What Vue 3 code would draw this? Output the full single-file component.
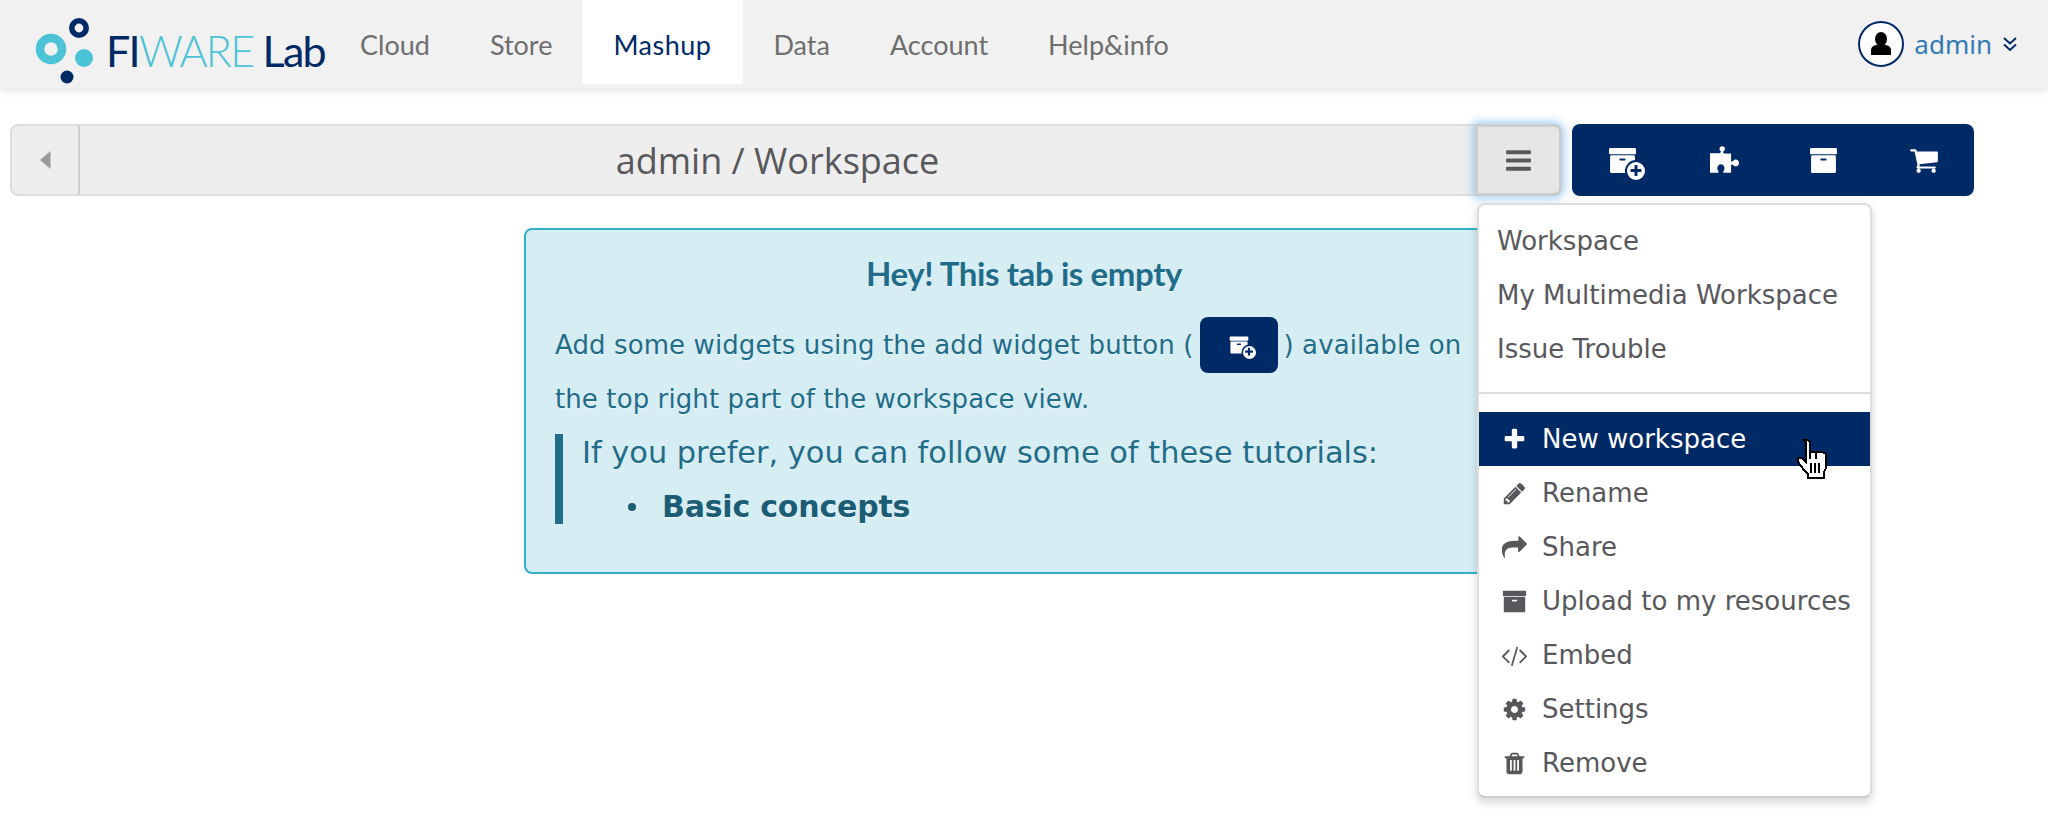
<script setup>
const navItems = [
  { label: 'Cloud' },
  { label: 'Store' },
  { label: 'Mashup', active: true },
  { label: 'Data' },
  { label: 'Account' },
  { label: 'Help&info' }
]
const workspaces = ['Workspace', 'My Multimedia Workspace', 'Issue Trouble']
const P = {
  plus: 'M1600 736v192q0 40-28 68t-68 28h-416v416q0 40-28 68t-68 28h-192q-40 0-68-28t-28-68v-416h-416q-40 0-68-28t-28-68v-192q0-40 28-68t68-28h416v-416q0-40 28-68t68-28h192q40 0 68 28t28 68v416h416q40 0 68 28t28 68z',
  pencil: 'M491 1536l91-91-235-235-91 91v107h128v128h107zm523-928q0-22-22-22-10 0-17 7l-542 542q-7 7-7 17 0 22 22 22 10 0 17-7l542-542q7-7 7-17zm-54-192l416 416-832 832h-416v-416zm683 96q0 53-37 90l-166 166-416-416 166-165q36-38 90-38 53 0 91 38l235 234q37 39 37 91z',
  share: 'M1792 640q0 26-19 45l-512 512q-19 19-45 19t-45-19-19-45v-256h-224c-500 0-730 120-730 520 0 60 6 120 12 160 2 10 4 22 4 30 0 22-12 32-30 32-20 0-36-18-46-34-50-110-158-300-158-500 0-150 30-300 130-420 150-170 420-270 838-270h224v-256q0-26 19-45t45-19 45 19l512 512q19 19 19 45z',
  archive: 'M1088 832q0-26-19-45t-45-19h-256q-26 0-45 19t-19 45 19 45 45 19h256q26 0 45-19t19-45zm576-192v960q0 26-19 45t-45 19h-1408q-26 0-45-19t-19-45v-960q0-26 19-45t45-19h1408q26 0 45 19t19 45zm64-448v256q0 26-19 45t-45 19h-1536q-26 0-45-19t-19-45v-256q0-26 19-45t45-19h1536q26 0 45 19t19 45z',
  code: 'M553 1399l-50 50q-10 10-23 10t-23-10l-466-466q-10-10-10-23t10-23l466-466q10-10 23-10t23 10l50 50q10 10 10 23t-10 23l-393 393 393 393q10 10 10 23t-10 23zm591-1067l-373 1291q-4 13-15.5 19.5t-23.5 2.5l-62-17q-13-4-19.5-15.5t-2.5-24.5l373-1291q4-13 15.5-19.5t23.5-2.5l62 17q13 4 19.5 15.5t2.5 24.5zm657 651l-466 466q-10 10-23 10t-23-10l-50-50q-10-10-10-23t10-23l393-393-393-393q-10-10-10-23t10-23l50-50q10-10 23-10t23 10l466 466q10 10 10 23t-10 23z',
  cog: 'M1152 896q0-106-75-181t-181-75-181 75-75 181 75 181 181 75 181-75 75-181zm512-109v222q0 12-8 23t-20 13l-185 28q-19 54-39 91 35 50 107 138 10 12 10 25t-9 23q-27 37-99 108t-94 71q-12 0-26-9l-138-108q-44 23-91 38-16 136-29 186-7 28-36 28h-222q-14 0-24.5-8.5t-11.5-21.5l-28-184q-49-16-90-37l-141 107q-10 9-25 9-14 0-25-11-126-114-165-168-7-10-7-23 0-12 8-23 15-21 51-66.5t54-70.5q-27-50-41-99l-183-27q-13-2-21-12.5t-8-23.5v-222q0-12 8-23t19-13l186-28q14-46 39-92-40-57-107-138-10-12-10-24 0-10 9-23 26-36 98.5-107.5t94.5-71.5q13 0 26 10l138 107q44-23 91-38 16-136 29-186 7-28 36-28h222q14 0 24.5 8.5t11.5 21.5l28 184q49 16 90 37l142-107q9-9 24-9 13 0 25 10 129 119 165 170 7 8 7 22 0 12-8 23-15 21-51 66.5t-54 70.5q26 50 41 98l183 28q13 2 21 12.5t8 23.5z',
  trash: 'M704 1376v-704q0-14-9-23t-23-9h-64q-14 0-23 9t-9 23v704q0 14 9 23t23 9h64q14 0 23-9t9-23zm256 0v-704q0-14-9-23t-23-9h-64q-14 0-23 9t-9 23v704q0 14 9 23t23 9h64q14 0 23-9t9-23zm256 0v-704q0-14-9-23t-23-9h-64q-14 0-23 9t-9 23v704q0 14 9 23t23 9h64q14 0 23-9t9-23zm-544-992h448l-48-117q-7-9-17-11h-317q-10 2-17 11zm928 32v64q0 14-9 23t-23 9h-96v948q0 83-47 143.5t-113 60.5h-832q-66 0-113-58.5t-47-141.5v-952h-96q-14 0-23-9t-9-23v-64q0-14 9-23t23-9h309l70-167q15-37 54-63t79-26h320q40 0 79 26t54 63l70 167h309q14 0 23 9t9 23z',
  bars: 'M1664 1344v128q0 26-19 45t-45 19h-1408q-26 0-45-19t-19-45v-128q0-26 19-45t45-19h1408q26 0 45 19t19 45zm0-512v128q0 26-19 45t-45 19h-1408q-26 0-45-19t-19-45v-128q0-26 19-45t45-19h1408q26 0 45 19t19 45zm0-512v128q0 26-19 45t-45 19h-1408q-26 0-45-19t-19-45v-128q0-26 19-45t45-19h1408q26 0 45 19t19 45z',
  cart: 'M704 1536q0 52-38 90t-90 38-90-38-38-90 38-90 90-38 90 38 38 90zm896 0q0 52-38 90t-90 38-90-38-38-90 38-90 90-38 90 38 38 90zm128-1088v512q0 24-16.5 42.5t-40.5 21.5l-1044 122q13 60 13 70 0 16-24 64h920q26 0 45 19t19 45-19 45-45 19h-1024q-26 0-45-19t-19-45q0-11 8-31.5t16-36 21.5-40 15.5-29.5l-177-823h-204q-26 0-45-19t-19-45 19-45 45-19h256q16 0 28.5 6.5t19.5 15.5 13 24.5 8 26 5.5 29.5 4.5 26h1201q26 0 45 19t19 45z',
  puzzle: 'M760 300c-40-20-60-60-60-100 0-70 50-120 120-120s120 50 120 120c0 40-20 80-60 100-30 20-30 60 10 90 50 20 220 20 320 10v330c20 40 70 30 100-10 30-30 60-50 110-50 80 0 140 70 140 150s-60 150-140 150c-50 0-80-20-110-50-30-40-80-50-100-10v340H900c-50-10-50-50-20-90 30-30 40-70 40-110 0-90-70-170-160-170s-160 80-160 170c0 40 10 80 40 110 30 40 30 80-20 90H280V390h370c60 0 130-40 110-90z'
}
const actions = [
  { label: 'New workspace', icon: P.plus, hover: true },
  { label: 'Rename', icon: P.pencil },
  { label: 'Share', icon: P.share },
  { label: 'Upload to my resources', icon: P.archive },
  { label: 'Embed', icon: P.code },
  { label: 'Settings', icon: P.cog },
  { label: 'Remove', icon: P.trash }
]
</script>

<template>
  <div class="page">
    <header class="nav">
      <div class="logo">
        <svg class="logo-mark" width="76" height="66" viewBox="0 0 76 66">
          <circle cx="17" cy="31" r="11" fill="none" stroke="#4dc3d7" stroke-width="8.5" />
          <circle cx="45" cy="10" r="7.2" fill="none" stroke="#002a66" stroke-width="5.6" />
          <circle cx="50" cy="40" r="9" fill="#4dc3d7" />
          <circle cx="33" cy="59" r="6.5" fill="#002a66" />
        </svg>
        <span class="logo-text"><span class="navy">FI</span><span class="teal">WARE</span><span class="navy lab">Lab</span></span>
      </div>
      <nav class="nav-items">
        <a v-for="item in navItems" :key="item.label" class="nav-item" :class="{ active: item.active }">{{ item.label }}</a>
      </nav>
      <div class="user">
        <span class="avatar">
          <svg width="26" height="26" viewBox="0 0 26 26"><ellipse cx="13" cy="8" rx="6" ry="7" fill="#000" /><path d="M3 24v-5c0-3 3-5 7-5.500h6c4 .5 7 2.500 7 5.500v5z" fill="#000" /></svg>
        </span>
        <span class="user-name">admin</span>
        <svg class="user-chev" width="16" height="16" viewBox="0 0 16 16"><path d="M2 2l6 5.500 6-5.500M2 8.500l6 5.500 6-5.500" fill="none" stroke="#002a66" stroke-width="2" /></svg>
      </div>
    </header>

    <main class="main">
      <div class="toolbar">
        <div class="crumb">
          <button class="back">
            <svg width="11" height="18" viewBox="0 0 11 18"><path d="M10.500 0v18L0 9z" fill="#999" /></svg>
          </button>
          <div class="title">admin / Workspace</div>
          <button class="menu-btn">
            <svg width="29" height="29" viewBox="0 0 1792 1792"><path :d="P.bars" fill="#5a5a5e" /></svg>
          </button>
        </div>
        <div class="tools">
          <button class="tool">
            <span class="add-icon">
              <svg width="29" height="29" viewBox="0 0 1792 1792"><path :d="P.archive" fill="#fff" /></svg>
              <span class="add-badge"><svg width="14" height="14" viewBox="0 0 1792 1792"><path :d="P.plus" fill="#002a66" /></svg></span>
            </span>
          </button>
          <button class="tool"><svg class="puzzle" width="29" height="27" viewBox="280 80 1280 1170"><path :d="P.puzzle" fill="#fff" /></svg></button>
          <button class="tool"><svg width="29" height="29" viewBox="0 0 1792 1792"><path :d="P.archive" fill="#fff" /></svg></button>
          <button class="tool"><svg width="30" height="30" viewBox="0 0 1792 1792"><path :d="P.cart" fill="#fff" /></svg></button>
        </div>
      </div>

      <section class="alert">
        <h4 class="alert-title">Hey! This tab is empty</h4>
        <p class="alert-text">Add some widgets using the add widget button (<span class="inline-btn"><span class="add-icon small"><svg width="20" height="20" viewBox="0 0 1792 1792"><path :d="P.archive" fill="#fff" /></svg><span class="add-badge"><svg width="10" height="10" viewBox="0 0 1792 1792"><path :d="P.plus" fill="#002a66" /></svg></span></span></span>) available on<br />the top right part of the workspace view.</p>
        <blockquote class="quote">
          <p class="quote-text">If you prefer, you can follow some of these tutorials:</p>
          <ul class="quote-list"><li>Basic concepts</li></ul>
        </blockquote>
      </section>
    </main>

    <div class="menu">
      <a v-for="w in workspaces" :key="w" class="menu-row plain">{{ w }}</a>
      <div class="divider"></div>
      <a v-for="a in actions" :key="a.label" class="menu-row" :class="{ hover: a.hover }">
        <svg class="menu-icon" width="25" height="25" viewBox="0 0 1792 1792"><path :d="a.icon" fill="currentColor" /></svg>
        {{ a.label }}
      </a>
    </div>

    <svg class="cursor" width="36" height="40" viewBox="0 0 18 20" shape-rendering="crispEdges">
      <path d="M5.500.5h2l1 1v5h6l2 1v7l-1 2v3h-8v-2l-2-2-3-4v-2h2l2 2V1.500z" fill="#fff" stroke="#000" stroke-width="1" />
      <path d="M8.500 12h1v5h-1zM10.500 12h1v5h-1zM12.500 12h1v5h-1zM8 7h1v3H8zM11 7h1v3h-1z" fill="#000" />
    </svg>
  </div>
</template>

<style>
html, body { margin: 0; background: #fff; }
</style>

<style scoped>
.page {
  position: relative;
  width: 2048px;
  height: 820px;
  overflow: hidden;
  background: #fff;
  font-family: "DejaVu Sans", Verdana, sans-serif;
}
.nav {
  display: flex;
  align-items: flex-start;
  height: 88px;
  background: #f1f1f1;
  box-shadow: 0 3px 8px rgba(0, 0, 0, .1);
  padding-left: 34px;
  box-sizing: border-box;
}
.logo { display: flex; align-items: flex-start; width: 296px; flex: none; }
.logo-mark { margin-top: 18px; flex: none; }
.logo-text {
  margin: 24px 0 0 -4px;
  font-family: Lato, sans-serif;
  font-weight: 300;
  font-size: 43px;
  letter-spacing: -1.7px;
  line-height: 54px;
  white-space: nowrap;
}
.navy { color: #002a66; font-weight: 400; }
.teal { color: #4dc3d7; }
.lab { margin-left: 9px; }
.nav-items { display: flex; height: 84px; }
.nav-item {
  display: block;
  padding: 0 30px;
  font-family: Lato, sans-serif;
  font-size: 27px;
  line-height: 90px;
  color: #6e6e6e;
}
.nav-item.active { background: #fff; color: #002a66; padding: 0 32px 0 31px; letter-spacing: .5px; }
.user {
  margin-left: auto;
  display: flex;
  align-items: center;
  height: 88px;
  padding-right: 30px;
}
.avatar {
  width: 46px;
  height: 46px;
  box-sizing: border-box;
  border: 2px solid #002a66;
  border-radius: 50%;
  background: #fff;
  display: flex;
  align-items: center;
  justify-content: center;
}
.user-name {
  margin: 0 10px;
  font-family: "Noto Sans", sans-serif;
  font-size: 26px;
  color: #337ab7;
}
.main { padding: 36px 74px 0 10px; }
.toolbar { display: flex; gap: 10px; height: 72px; }
.crumb {
  flex: 1;
  display: flex;
  box-sizing: border-box;
  background: #eee;
  border: 2px solid #ddd;
  border-radius: 8px;
}
.back {
  width: 68px;
  border: 0;
  border-right: 2px solid #ccc;
  background: transparent;
  padding: 0;
  display: flex;
  align-items: center;
  justify-content: center;
}
.title {
  flex: 1;
  text-align: center;
  font-family: "Open Sans", sans-serif;
  font-size: 36px;
  line-height: 70px;
  color: #58585c;
}
.menu-btn {
  width: 87px;
  margin: -2px -2px -2px 0;
  box-sizing: border-box;
  border: 3px solid #ccc;
  border-radius: 0 8px 8px 0;
  background: #e6e6e6;
  box-shadow: 0 0 10px 2px rgba(102, 175, 233, .65);
  display: flex;
  align-items: center;
  justify-content: center;
  padding: 0;
}
.tools {
  display: flex;
  width: 402px;
  background: #002a66;
  border-radius: 8px;
}
.tool {
  flex: 1;
  border: 0;
  padding: 0;
  background: transparent;
  display: flex;
  align-items: center;
  justify-content: center;
}
.puzzle { margin-left: 3px; margin-bottom: 2px; }
.add-icon { position: relative; display: inline-flex; }
.add-badge {
  position: absolute;
  right: -8px;
  bottom: -5px;
  width: 18px;
  height: 18px;
  background: #fff;
  border-radius: 50%;
  box-shadow: 0 0 0 2px #002a66;
  display: flex;
  align-items: center;
  justify-content: center;
}
.add-icon.small .add-badge {
  right: -7px;
  bottom: -4px;
  width: 13px;
  height: 13px;
  box-shadow: 0 0 0 1.500px #002a66;
}
.alert {
  width: 1000px;
  height: 346px;
  box-sizing: border-box;
  margin: 32px 0 0 514px;
  padding: 20px 29px 0;
  background: #d7edf4;
  border: 2px solid #33b0c8;
  border-radius: 8px;
  color: #1f6d88;
  text-shadow: 0 1px 0 rgba(255, 255, 255, .5);
}
.alert-title {
  margin: 0 0 22px;
  text-align: center;
  font-family: Lato, sans-serif;
  font-weight: 700;
  font-size: 33px;
  letter-spacing: -.4px;
  line-height: 46px;
}
.alert-text {
  margin: 0;
  font-size: 26px;
  letter-spacing: .1px;
  line-height: 54px;
  white-space: nowrap;
}
.inline-btn {
  display: inline-flex;
  align-items: center;
  justify-content: center;
  vertical-align: middle;
  width: 78px;
  height: 56px;
  margin: -8px 6px -4px;
  background: #002a66;
  border-radius: 8px;
}
.quote {
  margin: 8px 0 0;
  border-left: 8px solid #1f6d88;
  padding-left: 19px;
  height: 90px;
}
.quote-text {
  margin: 0;
  font-size: 30.4px;
  line-height: 38px;
  white-space: nowrap;
}
.quote-list {
  margin: 17px 0 0;
  padding: 0 0 0 80px;
  list-style: none;
  font-size: 30px;
  font-weight: 700;
  letter-spacing: -.2px;
  line-height: 36px;
  color: #1b5d75;
}
.quote-list li { position: relative; }
.quote-list li::before {
  content: "";
  position: absolute;
  left: -34px;
  top: 14px;
  width: 8px;
  height: 8px;
  border-radius: 50%;
  background: #1b5d75;
}
.menu {
  position: absolute;
  left: 1477px;
  top: 203px;
  width: 395px;
  height: 595px;
  box-sizing: border-box;
  padding-top: 9px;
  background: #fff;
  border: 2px solid #ddd;
  border-bottom-color: #ccc;
  border-radius: 8px;
  box-shadow: 0 4px 10px rgba(0, 0, 0, .18);
}
.menu-row {
  display: flex;
  align-items: center;
  height: 54px;
  padding-left: 18px;
  font-size: 26px;
  color: #58585c;
  white-space: nowrap;
}
.divider { height: 2px; background: #ddd; margin: 16px 0 18px; }
.menu-row:not(.plain) { padding-left: 23px; }
.menu-icon { width: 25px; margin-right: 15px; flex: none; }
.menu-row.hover { background: #002a66; color: #fff; }
.cursor { position: absolute; left: 1793px; top: 439px; }
</style>
